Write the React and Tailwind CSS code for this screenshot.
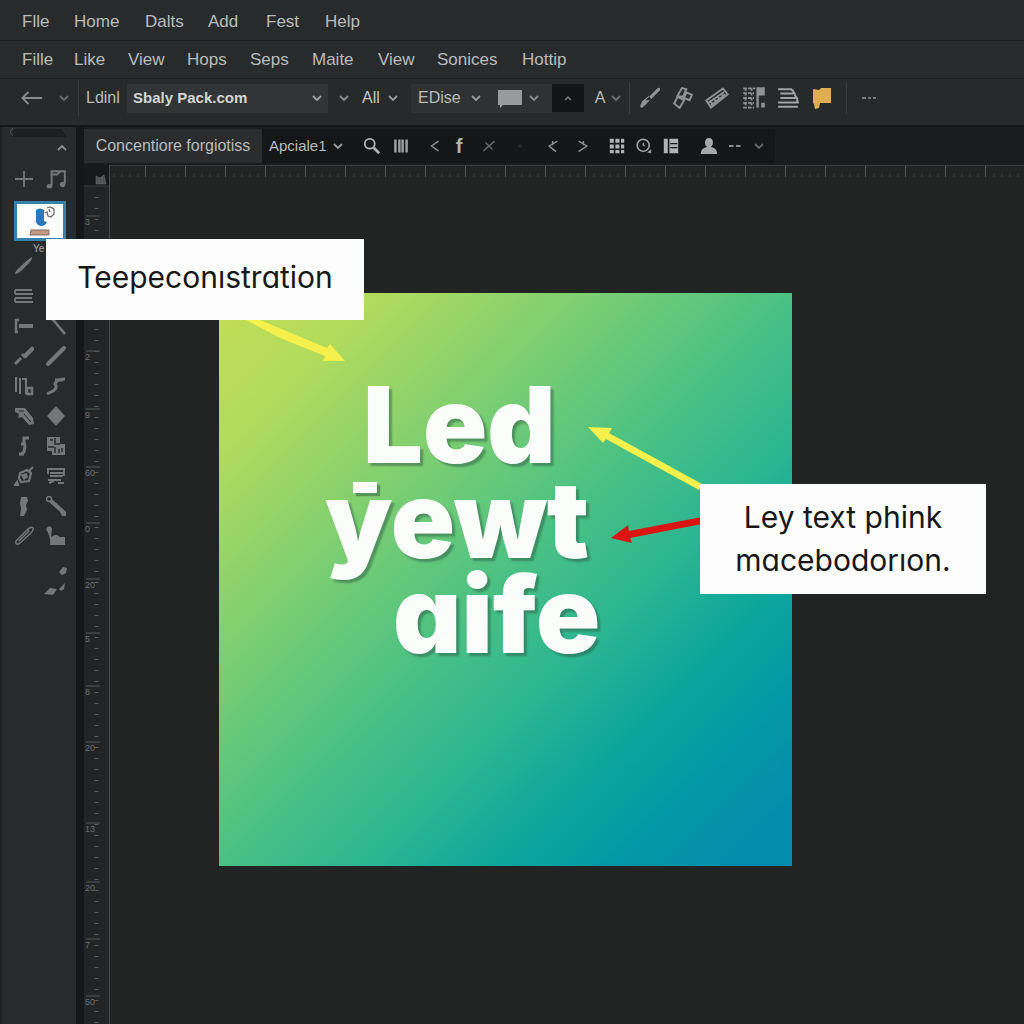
import React from "react";

const primaryMenu = ["Flle", "Home", "Dalts", "Add", "Fest", "Help"];
const primaryWidths = ["w-[52px]", "w-[71px]", "w-[63px]", "w-[58px]", "w-[59px]", "w-[60px]"];
const secondaryMenu = ["Fille", "Like", "View", "Hops", "Seps", "Maite", "View", "Sonices", "Hottip"];
const secondaryWidths = [
  "w-[52px]", "w-[54px]", "w-[59px]", "w-[63px]", "w-[62px]", "w-[66px]", "w-[59px]", "w-[85px]", "w-[60px]",
];

function Glyph({ children, size = 20, className = "" }) {
  return (
    <svg width={size} height={size} viewBox="0 0 20 20" fill="none" stroke="currentColor" strokeWidth="1.5" className={className} aria-hidden="true">
      {children}
    </svg>
  );
}

function Caret({ className = "text-[#8a8d8d]" }) {
  return (
    <svg width="12" height="12" viewBox="0 0 12 12" fill="none" stroke="currentColor" strokeWidth="1.8" className={className} aria-hidden="true">
      <path d="M2 4l4 4 4-4" />
    </svg>
  );
}

function Tool({ label, className, children }) {
  return (
    <button type="button" aria-label={label} className={`flex shrink-0 items-center justify-center ${className}`}>
      {children}
    </button>
  );
}

function Divider({ className = "h-7" }) {
  return <span className={`w-px shrink-0 bg-[#393c3d] ${className}`} />;
}

function Dropdown({ label, value, className, textClass = "" }) {
  return (
    <div className={`relative flex shrink-0 items-center ${className}`}>
      <select aria-label={label} className={`h-full w-full appearance-none bg-transparent outline-none ${textClass}`}>
        <option>{value}</option>
      </select>
      <Caret className="pointer-events-none absolute right-1 text-[#9a9d9d]" />
    </div>
  );
}

function MenuRow({ items, widths, className, label }) {
  return (
    <nav aria-label={label} className={`flex items-center pl-[22px] text-[17px] text-[#b9bcbc] ${className}`}>
      {items.map((item, i) => (
        <button key={i} type="button" className={`shrink-0 text-left ${widths[i]}`}>
          {item}
        </button>
      ))}
    </nav>
  );
}

function MainToolbar() {
  return (
    <div className="flex h-[47px] items-center border-t border-[#1c1e1f] bg-[#272a2b] pb-2 text-[16px] text-[#b9bcbc]">
      <Tool label="Back" className="ml-5 w-6 text-[#8a8d8d]">
        <Glyph size={24}><path d="M18.500 10H2M7 5l-5 5 5 5" /></Glyph>
      </Tool>
      <Tool label="History" className="ml-[14px] w-3"><Caret className="text-[#6b6e6f]" /></Tool>
      <Divider className="ml-2 h-9" />
      <label htmlFor="source" className="ml-[7px] w-[41px] shrink-0">Ldinl</label>
      <div className="relative flex h-[29px] w-[201px] shrink-0 items-center bg-[#323536]">
        <select id="source" className="h-full w-full appearance-none bg-transparent pl-[6px] text-[15px] font-bold text-[#d3d5d5] outline-none">
          <option>Sbaly Pack.com</option>
        </select>
        <Caret className="pointer-events-none absolute right-[5px] text-[#a0a3a3]" />
      </div>
      <Tool label="More sources" className="ml-[10px] w-3"><Caret /></Tool>
      <Dropdown label="Scope" value="All" className="ml-3 h-7 w-[41px]" textClass="text-[#c4c6c6]" />
      <div className="ml-2 flex h-[29px] w-[141px] shrink-0 items-center bg-[#2f3233]">
        <Dropdown label="Mode" value="EDise" className="h-full w-[75px]" textClass="pl-[7px]" />
        <Tool label="Swatch" className="ml-[11px] w-[26px]">
          <svg width="26" height="20" viewBox="0 0 26 20" aria-hidden="true">
            <path d="M1 2h24v15H6l-3 3v-3H1z" fill="#989b9b" />
          </svg>
        </Tool>
        <Tool label="Swatch options" className="ml-[5px] w-3"><Caret /></Tool>
      </div>
      <Tool label="Fill" className="h-7 w-8 bg-[#131415]">
        <svg width="8" height="6" viewBox="0 0 8 6" fill="none" stroke="#777a7a" strokeWidth="1.500"><path d="M1 5l3-3 3 3" /></svg>
      </Tool>
      <button type="button" className="ml-[9px] w-[14px] shrink-0">A</button>
      <Tool label="Font options" className="ml-[3px] w-3"><Caret className="text-[#707373]" /></Tool>
      <Divider className="ml-[7px] h-8" />
      <Tool label="Brush" className="ml-2 w-6 text-[#8f9292]">
        <Glyph size={22}><path d="M17 1q3-1 2 2l-9 9-4 0zM9 8L3 13q-2 3-2 5 1 2 4-1l6-6z" fill="currentColor" stroke="none" /></Glyph>
      </Tool>
      <Tool label="Link shapes" className="ml-[9px] w-6 text-[#8f9292]">
        <Glyph size={22}><path d="M9 1l4 1-3 7-5-1zM5 9l6 3-4 7-5-4zM13 5l5 2-2 5-5-2z" strokeWidth="1.800" /></Glyph>
      </Tool>
      <Tool label="Measure" className="ml-[10px] w-6 text-[#8f9292]">
        <Glyph size={24}><path d="M1 12L15 2l4 5L5 18zM4 12l3 4M7 10l3 4M10 8l3 4M13 6l3 3M3 14l13-9M5 16l12-9" /></Glyph>
      </Tool>
      <Tool label="Arrange" className="ml-[13px] w-6 text-[#8f9292]">
        <Glyph size={24}>
          <path d="M1 2h10M1 6h9M1 10h9M1 14h9M1 18h9" strokeDasharray="3 1" />
          <path d="M3 2v16M8 2v16" strokeDasharray="2 2" />
          <path d="M12 1h7v7h-5v10h-2zM16 14h3v4h-3z" fill="currentColor" stroke="none" />
        </Glyph>
      </Tool>
      <Tool label="Align text" className="ml-[10px] w-6 text-[#a0a3a3]">
        <Glyph size={22}><path d="M1 2h12l2 2M3 6h13l-2-3M3 10h15l-2-3M1 14h18l-1-3M1 18h18" strokeWidth="1.800" /></Glyph>
      </Tool>
      <Tool label="Note" className="ml-[10px] w-6">
        <svg width="20" height="23" viewBox="0 0 20 23" aria-hidden="true"><path d="M1 2l6 1 2-2h10v15H8l-1 5-4 1-1-5-1-1z" fill="#dfad50" /></svg>
      </Tool>
      <Divider className="ml-3 h-8" />
      <Tool label="More tools" className="ml-[14px] w-4 text-[#777a7a]">
        <svg width="16" height="4" viewBox="0 0 16 4" fill="currentColor"><path d="M1 1h4v2H1zM7 1h3v2H7zM12 1h3v2h-3z" /></svg>
      </Tool>
    </div>
  );
}

function OptionsBar() {
  return (
    <div className="flex h-[38px] items-center bg-[#1b1c1d] text-[15px] text-[#b9bcbc]">
      <button type="button" className="h-[34px] w-[178px] shrink-0 bg-[#2a2c2d] text-center text-[16px]">Concentiore forgiotiss</button>
      <div className="flex h-[34px] shrink-0 items-center bg-[#151617]">
        <Dropdown label="Preset" value="Apciale1" className="ml-[7px] h-full w-[79px]" />
        <Divider className="ml-[6px]" />
        <Tool label="Search" className="ml-[7px] w-5 text-[#b0b3b3]">
          <Glyph size={18}><circle cx="7.500" cy="7.500" r="5.500" strokeWidth="2" /><path d="M12 12l6 6" strokeWidth="3" /></Glyph>
        </Tool>
        <Tool label="Columns" className="ml-[9px] w-5 text-[#a0a3a3]">
          <Glyph size={16}><path d="M3 2v16M8 2v16M12 2v16M17 2v16" strokeWidth="3" /></Glyph>
        </Tool>
        <Divider className="ml-[7px]" />
        <Tool label="Previous" className="ml-[6px] w-5 text-[#8f9292]"><Glyph size={14}><path d="M15 3L5 10l10 7" strokeWidth="2" /></Glyph></Tool>
        <button type="button" className="ml-1 w-5 shrink-0 text-center text-[20px] font-bold text-[#b0b3b3]">f</button>
        <Tool label="Clear" className="ml-[10px] w-5 text-[#656869]"><Glyph size={14}><path d="M2 17L18 3M5 5l10 10" strokeWidth="2" /></Glyph></Tool>
        <Tool label="State" className="ml-[11px] w-5 text-[#303334]"><Glyph size={12}><circle cx="10" cy="10" r="2" /></Glyph></Tool>
        <Divider className="ml-[7px]" />
        <Tool label="Step back" className="ml-[6px] w-5 text-[#8f9292]"><Glyph size={14}><path d="M15 3L3 10l10 8M8 3v6" strokeWidth="2" /></Glyph></Tool>
        <Tool label="Step forward" className="ml-2 w-5 text-[#8f9292]"><Glyph size={14}><path d="M5 3l12 7-12 8M12 3v6" strokeWidth="2" /></Glyph></Tool>
        <Divider className="ml-[6px]" />
        <Tool label="Grid" className="ml-2 w-5 text-[#b0b3b3]">
          <Glyph size={16}><path d="M1 1h5v5H1zM8 1h5v5H8zM15 1h4v5h-4zM1 8h5v5H1zM8 8h5v5H8zM15 8h4v5h-4zM1 15h5v4H1zM8 15h5v4H8zM15 15h4v4h-4z" fill="currentColor" stroke="none" /></Glyph>
        </Tool>
        <Tool label="Inspect" className="ml-[7px] w-5 text-[#a0a3a3]">
          <Glyph size={16}><circle cx="9" cy="9" r="7.500" strokeWidth="2" /><path d="M9 6v3l2 1" /><path d="M14 18l5-4v5z" fill="currentColor" stroke="none" /></Glyph>
        </Tool>
        <Tool label="Layout" className="ml-[7px] w-5 text-[#b0b3b3]">
          <Glyph size={16}><path d="M1 1h5v18H1zM8 1h11v18H8z" fill="currentColor" stroke="none" /><path d="M9 7h9M9 12h9" stroke="#151617" /></Glyph>
        </Tool>
        <Divider className="ml-2" />
        <Tool label="Account" className="ml-[9px] w-5 text-[#a5a8a8]">
          <Glyph size={18}><path d="M10 1c6 0 5 9 2 10 4 1 7 2 7 8H1c0-6 3-7 7-8C5 10 4 1 10 1z" fill="currentColor" stroke="none" /></Glyph>
        </Tool>
        <Tool label="More options" className="ml-[6px] w-5 text-[#8a8d8d]">
          <svg width="12" height="4" viewBox="0 0 12 4" fill="currentColor"><path d="M0 1h4l1 1-1 1H0zM7 1h4l1 1-1 1H7z" /></svg>
        </Tool>
        <Tool label="Expand" className="ml-[6px] mr-2 w-4"><Caret className="text-[#656869]" /></Tool>
      </div>
    </div>
  );
}

const sideTools = [
  ["Paint", <path key="p" d="M18 1q1 3-7 10-6 7-10 7 0-3 5-7 7-7 12-10z" fill="currentColor" stroke="none" />],
  null,
  ["Paragraph", <path key="p" d="M1 4h17M1 8h18M1 12h17M1 16h18M1 4v4M1 12v4" strokeWidth="1.800" />],
  null,
  ["Anchor left", <><path d="M2 3v14M1 4h4M1 16h3" strokeWidth="2.500" /><path d="M5 10h14" strokeWidth="4" /></>],
  ["Line pen", <path key="p" d="M1 2q5 0 8 4l9 11M15 13l4 5" strokeWidth="2.500" />],
  ["Dropper", <><path d="M18 3l-7 7" strokeWidth="4.500" strokeLinecap="round" /><path d="M10 8l-2 2M7 12l-6 6" strokeWidth="3" /></>],
  ["Line", <path key="p" d="M18 2L2 18" strokeWidth="4" strokeLinecap="round" />],
  ["Library", <><path d="M2 1v15M6 2v16M8 3h4v15" strokeWidth="2" /><path d="M13 12h5v6h-5z" strokeWidth="2.500" /></>],
  ["Curve", <path key="p" d="M1 18l6-3q5-3 2-7 1-5 10-5M9 4h8" strokeWidth="3" />],
  ["Shears", <><path d="M1 2h10l8 10 1 6-5 1-7-8-4 1 1-4-4-2z" fill="currentColor" stroke="none" /><path d="M10 8l7 8M5 5h5" stroke="#282b2c" strokeWidth="1" /></>],
  ["Diamond", <path key="p" d="M10 0l9 10-9 10L1 10z" fill="currentColor" stroke="none" />],
  ["Flow", <path key="p" d="M15 2h-5v4l1 4-1 6-4 3M7 8h5M5 18h5" strokeWidth="3" />],
  ["Blocks", <><path d="M1 1h13v7h5v11H6v-4H1z" fill="currentColor" stroke="none" /><path d="M4 4h3M9 2v6h5M2 11h6M9 11v6M13 13v4M16 12v4" stroke="#282b2c" /></>],
  ["Stamp", <><path d="M6 7l7-3 4 3-2 8-8 1-2-4zM14 6l5-5M3 16l-2 3h3z" strokeWidth="2.200" /><path d="M8 9l4-1 1 3-3 2z" fill="currentColor" /></>],
  ["Text stack", <><path d="M1 3h18M4 7h14M4 10h13M2 14h13M2 3v5M18 3v7" strokeWidth="1.800" /><path d="M3 17l5-2M12 17h6" strokeWidth="2.200" /></>],
  ["Shape pen", <path key="p" d="M7 1h6l1 4-2 4 1 5-3 6H6l1-8-1-5z" fill="currentColor" stroke="none" />],
  ["Wrench", <><circle cx="3" cy="3" r="2.500" /><path d="M5 5l10 9" strokeWidth="4" /><path d="M13 14l3-2 4 4v4h-4z" fill="currentColor" stroke="none" /></>],
  ["Clip", <path key="p" d="M2 15L14 3q4-3 5-1 1 2-3 6L6 17q-5 3-4-2zM5 15L15 5M13 3l2 2" strokeWidth="1.500" />],
  ["Boot", <path key="p" d="M0 3q3-5 6-1l-1 9q5-4 9 0h5v8H4q1-8-4-16z" fill="currentColor" stroke="none" />],
];

function Sidebar() {
  return (
    <aside className="w-[76px] shrink-0 border-l-2 border-[#1d1f20] bg-[#282b2c] text-[#747778]">
      <div className="flex h-[10px] justify-center">
        <svg width="58" height="10" viewBox="0 0 58 10" fill="none"><path d="M4 2h47l6 8H0z" fill="#1d1f20" /><path d="M3 1L0 5l3 4" stroke="#555" /></svg>
      </div>
      <div className="flex h-[22px] items-center justify-end pr-2">
        <Tool label="Collapse" className="w-3 rotate-180"><Caret /></Tool>
      </div>
      <div className="flex h-10 items-center pl-[10px]">
        <Tool label="Add" className="w-6"><Glyph size={18}><path d="M10 1v18M0 10h20" strokeWidth="2" /></Glyph></Tool>
        <Tool label="Music" className="ml-2 w-6">
          <Glyph size={22}>
            <path d="M6 16V3h12v11M6 6h5l3-3" strokeWidth="1.800" />
            <ellipse cx="4" cy="16.500" rx="2.500" ry="2" fill="currentColor" stroke="none" />
            <ellipse cx="16" cy="15" rx="2.500" ry="2.500" fill="currentColor" stroke="none" />
          </Glyph>
        </Tool>
      </div>
      <button type="button" aria-label="Layer thumbnail" className="ml-3 mt-[2px] block h-10 w-[52px] border-[3px] border-[#3580ad] bg-white">
        <svg width="46" height="34" viewBox="0 0 46 34" aria-hidden="true">
          <path d="M19 6q4-3 8 0v11l3 1q-3 6-9 3-3-3-2-6z" fill="#2a78bd" />
          <path d="M30 4l3-1 4 2v5l-3 3-3-1-1-4-2 1M32 5l1 3" fill="none" stroke="#6c6c6c" strokeWidth="1.300" />
          <path d="M14 26h18v5H13z" fill="#c29a81" stroke="#826c60" />
        </svg>
      </button>
      <div className="h-[10px] pl-[31px] text-[10px] leading-4 text-[#aaadad]">Ye</div>
      <div className="grid grid-cols-2 gap-x-2 pl-[10px] pr-[8px]">
        {sideTools.map((tool, i) =>
          tool ? (
            <Tool key={i} label={tool[0]} className="h-[30px] w-6"><Glyph size={20}>{tool[1]}</Glyph></Tool>
          ) : (
            <span key={i} />
          )
        )}
      </div>
      <svg width="74" height="48" viewBox="0 0 74 48" fill="currentColor" aria-hidden="true">
        <path d="M57 21l4-5 4 1-1 5-4 2zM42 43l6-6 7 1-4 6zM57 38l6-6-1 6-3 2z" />
      </svg>
    </aside>
  );
}

const rulerLabels = [
  [220, "3"], [355, "2"], [413, "9"], [471, "60"], [527, "0"], [583, "20"], [637, "5"],
  [690, "8"], [746, "20"], [827, "13"], [886, "20"], [943, "7"], [1000, "50"],
];

function VerticalRuler() {
  return (
    <div className="w-[26px] shrink-0 self-stretch border-r border-[#45494a] bg-[#222425]">
      <svg width="25" height="859" viewBox="0 165 25 859" fill="none" aria-hidden="true">
        <path d="M0 165h25v21H0z" fill="#18191a" />
        <path d="M0 186h25" stroke="#3a3d3e" />
        <path d="M12 176l4 2 4-3 2 9H12zM15 178v6M18 177v7" fill="#4b4e4f" stroke="#77797a" strokeWidth="0.500" />
        <path d="M12.500 197v827" stroke="#5b5e5f" strokeWidth="4" strokeDasharray="1 10" />
        {rulerLabels.map(([y, text]) => (
          <g key={y}>
            <path d={`M2 ${y - 4}h14`} stroke="#55595a" />
            <text x="1" y={y + 5} fontSize="9" fill="#6d7071" fontFamily="Liberation Sans, sans-serif">{text}</text>
          </g>
        ))}
      </svg>
    </div>
  );
}

function HorizontalRuler() {
  return (
    <svg className="block h-[14px] w-full" fill="none" aria-hidden="true">
      <defs>
        <pattern id="ticks" x="35" y="0" width="40" height="14" patternUnits="userSpaceOnUse">
          <path d="M0.500 0v12" stroke="#55585a" />
          <path d="M9 8v4M17 9v3M25 9v3M33 8v4" stroke="#3c3f40" />
        </pattern>
      </defs>
      <rect width="100%" height="14" fill="url(#ticks)" />
      <path d="M0 0.500h2000" stroke="#3b3e3f" />
    </svg>
  );
}

function Artboard() {
  return (
    <section className="aspect-square w-[573px] bg-[linear-gradient(135deg,#c3de57_0%,#b1db5c_14%,#8cd26c_27%,#66c979_40%,#47c085_51%,#2bb592_63%,#0fa89a_73%,#039aa4_83%,#048dad_95%)] pt-[84px]">
      <h1 className="text-[106px] font-black leading-[95px] text-[#fbfdfb] [font-family:Inter,sans-serif] [font-feature-settings:'cv11'] [font-variation-settings:'opsz'_14] [text-shadow:3px_3px_2px_rgba(45,90,70,0.5)]">
        <span className="block pl-[144px]">Led</span>
        <span className="relative block pl-[106px]">
          <span className="absolute left-[134px] top-[10px] h-[11px] w-6 bg-[#fbfdfb] shadow-[3px_3px_1px_rgba(45,90,70,0.5)]" />
          yewt
        </span>
        <span className="block pl-[174px]">aife</span>
      </h1>
    </section>
  );
}

function Callout({ className, children }) {
  return (
    <p className={`absolute flex items-center justify-center bg-[#fdfdfd] text-center text-[30px] leading-[43px] text-[#171717] [font-family:Inter,sans-serif] [font-feature-settings:'cv11'] ${className}`}>
      {children}
    </p>
  );
}

export default function App() {
  return (
    <div className="relative flex min-h-screen flex-col overflow-hidden bg-[#222423] [font-family:'Liberation_Sans',Arial,sans-serif]">
      <header>
        <MenuRow label="Main menu" items={primaryMenu} widths={primaryWidths} className="h-[41px] border-b border-[#1b1d1e] bg-[#282b2c] pt-1" />
        <MenuRow label="Secondary menu" items={secondaryMenu} widths={secondaryWidths} className="h-[37px] bg-[#282b2c]" />
        <MainToolbar />
      </header>
      <div className="flex flex-1 border-t-2 border-[#141516]">
        <Sidebar />
        <div className="w-2 shrink-0 bg-[#151718]" />
        <div className="flex min-w-0 flex-1 flex-col">
          <OptionsBar />
          <div className="flex flex-1">
            <VerticalRuler />
            <main className="min-w-0 flex-1">
              <HorizontalRuler />
              <div className="pl-[109px] pt-[114px]">
                <Artboard />
              </div>
            </main>
          </div>
        </div>
      </div>
      <svg className="pointer-events-none absolute left-0 top-0" width="1024" height="700" viewBox="0 0 1024 700" aria-hidden="true">
        <path d="M246 320h14l67 28 3-4 15 17h-22l2-5-45-18z" fill="#f6f04c" />
        <path d="M588 427l24 1-3 5 93 51-3 6-93-51-3 4z" fill="#f6f04c" />
        <path d="M611 538l17-13 1 6 73-14v7l-72 14 2 5z" fill="#db1513" />
      </svg>
      <Callout className="left-[46px] top-[239px] h-[81px] w-[318px] pb-1">Teepeconıstration</Callout>
      <Callout className="left-[700px] top-[484px] h-[110px] w-[286px]">
        <span>Ley text phink<br />macebodorıon.</span>
      </Callout>
    </div>
  );
}
